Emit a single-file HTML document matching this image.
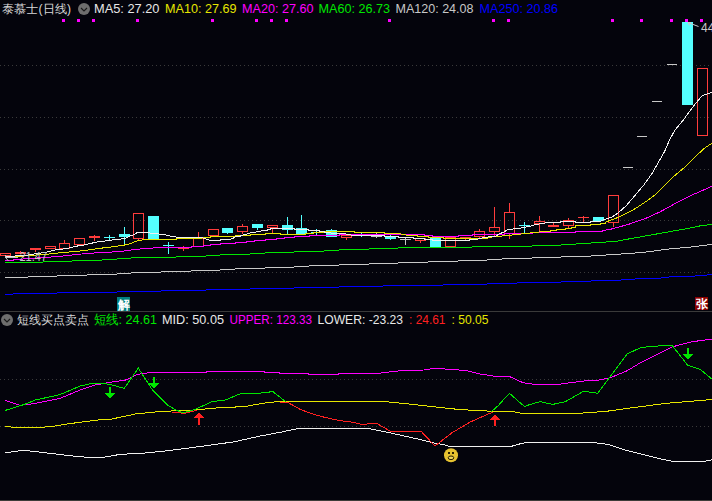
<!DOCTYPE html>
<html><head><meta charset="utf-8"><style>html,body{margin:0;padding:0;background:#04040c;overflow:hidden}svg{display:block}</style></head>
<body><svg width="712" height="501" shape-rendering="crispEdges" font-family="Liberation Sans, sans-serif">
<rect width="712" height="501" fill="#04040c"/>
<line x1="0" y1="65.5" x2="712" y2="65.5" stroke="#3a3a3a" stroke-dasharray="1 3"/>
<line x1="0" y1="117.5" x2="712" y2="117.5" stroke="#3a3a3a" stroke-dasharray="1 3"/>
<line x1="0" y1="169.5" x2="712" y2="169.5" stroke="#3a3a3a" stroke-dasharray="1 3"/>
<line x1="0" y1="220.5" x2="712" y2="220.5" stroke="#3a3a3a" stroke-dasharray="1 3"/>
<line x1="0" y1="272.5" x2="712" y2="272.5" stroke="#3a3a3a" stroke-dasharray="1 3"/>
<line x1="0" y1="379.5" x2="712" y2="379.5" stroke="#3a3a3a" stroke-dasharray="1 3"/>
<line x1="0" y1="426.5" x2="712" y2="426.5" stroke="#3a3a3a" stroke-dasharray="1 3"/>
<line x1="0" y1="311.5" x2="712" y2="311.5" stroke="#3a3a3a"/>
<rect x="0" y="500" width="712" height="1" fill="#3c3c38"/>
<rect x="62" y="19" width="3" height="3" fill="#ff00ff"/>
<rect x="77" y="19" width="3" height="3" fill="#ff00ff"/>
<rect x="92" y="19" width="3" height="3" fill="#ff00ff"/>
<rect x="136" y="19" width="3" height="3" fill="#ff00ff"/>
<rect x="211" y="19" width="3" height="3" fill="#ff00ff"/>
<rect x="255" y="19" width="3" height="3" fill="#ff00ff"/>
<rect x="270" y="19" width="3" height="3" fill="#ff00ff"/>
<rect x="285" y="19" width="3" height="3" fill="#ff00ff"/>
<rect x="388" y="19" width="3" height="3" fill="#ff00ff"/>
<rect x="492" y="19" width="3" height="3" fill="#ff00ff"/>
<rect x="507" y="19" width="3" height="3" fill="#ff00ff"/>
<rect x="611" y="19" width="3" height="3" fill="#ff00ff"/>
<rect x="640" y="19" width="3" height="3" fill="#ff00ff"/>
<rect x="670" y="19" width="3" height="3" fill="#ff00ff"/>
<rect x="685" y="19" width="3" height="3" fill="#ff00ff"/>
<rect x="700" y="19" width="3" height="3" fill="#ff00ff"/>
<rect x="0.5" y="253.5" width="10" height="2" fill="none" stroke="#ff3c3c"/>
<rect x="15" y="252" width="11" height="2" fill="#ff3c3c"/>
<line x1="20.5" y1="251" x2="20.5" y2="252" stroke="#ff3c3c"/>
<rect x="30" y="248" width="11" height="2" fill="#ff3c3c"/>
<line x1="35.5" y1="250" x2="35.5" y2="252" stroke="#ff3c3c"/>
<rect x="45.5" y="246.5" width="10" height="2" fill="none" stroke="#ff3c3c"/>
<rect x="59.5" y="243.5" width="10" height="5" fill="none" stroke="#ff3c3c"/>
<line x1="64.5" y1="240" x2="64.5" y2="243" stroke="#ff3c3c"/>
<rect x="74.5" y="238.5" width="10" height="6" fill="none" stroke="#ff3c3c"/>
<rect x="89" y="236" width="11" height="2" fill="#ff3c3c"/>
<line x1="94.5" y1="235" x2="94.5" y2="236" stroke="#ff3c3c"/>
<line x1="94.5" y1="238" x2="94.5" y2="241" stroke="#ff3c3c"/>
<rect x="104" y="237" width="11" height="1" fill="#54ffff"/>
<line x1="109.5" y1="235" x2="109.5" y2="241" stroke="#54ffff"/>
<rect x="119" y="234" width="11" height="3" fill="#54ffff"/>
<line x1="124.5" y1="227" x2="124.5" y2="234" stroke="#54ffff"/>
<line x1="124.5" y1="237" x2="124.5" y2="245" stroke="#54ffff"/>
<rect x="133.5" y="213.5" width="10" height="25" fill="none" stroke="#ff3c3c"/>
<line x1="138.5" y1="239" x2="138.5" y2="240" stroke="#ff3c3c"/>
<rect x="148" y="216" width="11" height="23" fill="#54ffff"/>
<rect x="163" y="245" width="11" height="1" fill="#54ffff"/>
<line x1="168.5" y1="242" x2="168.5" y2="254" stroke="#54ffff"/>
<rect x="178" y="248" width="11" height="1" fill="#ff3c3c"/>
<line x1="183.5" y1="246" x2="183.5" y2="248" stroke="#ff3c3c"/>
<line x1="183.5" y1="249" x2="183.5" y2="251" stroke="#ff3c3c"/>
<rect x="193.5" y="238.5" width="10" height="8" fill="none" stroke="#ff3c3c"/>
<line x1="198.5" y1="232" x2="198.5" y2="238" stroke="#ff3c3c"/>
<rect x="208.5" y="229.5" width="10" height="6" fill="none" stroke="#ff3c3c"/>
<rect x="222" y="228" width="11" height="5" fill="#54ffff"/>
<line x1="227.5" y1="233" x2="227.5" y2="234" stroke="#54ffff"/>
<rect x="237.5" y="226.5" width="10" height="5" fill="none" stroke="#ff3c3c"/>
<line x1="242.5" y1="224" x2="242.5" y2="226" stroke="#ff3c3c"/>
<line x1="242.5" y1="232" x2="242.5" y2="234" stroke="#ff3c3c"/>
<rect x="252" y="224" width="11" height="4" fill="#54ffff"/>
<line x1="257.5" y1="228" x2="257.5" y2="230" stroke="#54ffff"/>
<rect x="267.5" y="225.5" width="10" height="2" fill="none" stroke="#ff3c3c"/>
<line x1="272.5" y1="228" x2="272.5" y2="233" stroke="#ff3c3c"/>
<rect x="282" y="225" width="11" height="5" fill="#54ffff"/>
<line x1="287.5" y1="217" x2="287.5" y2="225" stroke="#54ffff"/>
<line x1="287.5" y1="230" x2="287.5" y2="234" stroke="#54ffff"/>
<rect x="296" y="228" width="11" height="6" fill="#54ffff"/>
<line x1="301.5" y1="215" x2="301.5" y2="228" stroke="#54ffff"/>
<rect x="311" y="232" width="11" height="1" fill="#54ffff"/>
<line x1="316.5" y1="229" x2="316.5" y2="235" stroke="#54ffff"/>
<rect x="326" y="230" width="11" height="7" fill="#54ffff"/>
<line x1="331.5" y1="229" x2="331.5" y2="230" stroke="#54ffff"/>
<rect x="341.5" y="235.5" width="10" height="2" fill="none" stroke="#ff3c3c"/>
<line x1="346.5" y1="238" x2="346.5" y2="240" stroke="#ff3c3c"/>
<rect x="356" y="235" width="11" height="1" fill="#54ffff"/>
<line x1="361.5" y1="233" x2="361.5" y2="237" stroke="#54ffff"/>
<rect x="371" y="236" width="11" height="1" fill="#c8c8c8"/>
<line x1="376.5" y1="233" x2="376.5" y2="238" stroke="#c8c8c8"/>
<rect x="385" y="236" width="11" height="3" fill="#54ffff"/>
<line x1="390.5" y1="235" x2="390.5" y2="236" stroke="#54ffff"/>
<line x1="390.5" y1="239" x2="390.5" y2="240" stroke="#54ffff"/>
<rect x="400" y="239" width="11" height="1" fill="#c8c8c8"/>
<line x1="405.5" y1="237" x2="405.5" y2="245" stroke="#c8c8c8"/>
<rect x="415.5" y="238.5" width="10" height="2" fill="none" stroke="#ff3c3c"/>
<line x1="420.5" y1="241" x2="420.5" y2="243" stroke="#ff3c3c"/>
<rect x="430" y="237" width="11" height="10" fill="#54ffff"/>
<rect x="445.5" y="237.5" width="10" height="9" fill="none" stroke="#ff3c3c"/>
<rect x="460" y="237" width="11" height="1" fill="#ff3c3c"/>
<line x1="465.5" y1="238" x2="465.5" y2="240" stroke="#ff3c3c"/>
<rect x="474.5" y="231.5" width="10" height="5" fill="none" stroke="#ff3c3c"/>
<line x1="479.5" y1="229" x2="479.5" y2="231" stroke="#ff3c3c"/>
<line x1="479.5" y1="237" x2="479.5" y2="238" stroke="#ff3c3c"/>
<rect x="489.5" y="227.5" width="10" height="4" fill="none" stroke="#ff3c3c"/>
<line x1="494.5" y1="207" x2="494.5" y2="227" stroke="#ff3c3c"/>
<line x1="494.5" y1="232" x2="494.5" y2="236" stroke="#ff3c3c"/>
<rect x="504.5" y="212.5" width="10" height="21" fill="none" stroke="#ff3c3c"/>
<line x1="509.5" y1="203" x2="509.5" y2="212" stroke="#ff3c3c"/>
<line x1="509.5" y1="234" x2="509.5" y2="239" stroke="#ff3c3c"/>
<rect x="519" y="225" width="11" height="1" fill="#54ffff"/>
<line x1="524.5" y1="222" x2="524.5" y2="233" stroke="#54ffff"/>
<rect x="534.5" y="221.5" width="10" height="2" fill="none" stroke="#ff3c3c"/>
<line x1="539.5" y1="216" x2="539.5" y2="221" stroke="#ff3c3c"/>
<line x1="539.5" y1="224" x2="539.5" y2="231" stroke="#ff3c3c"/>
<rect x="548" y="225" width="11" height="2" fill="#ff3c3c"/>
<line x1="553.5" y1="223" x2="553.5" y2="225" stroke="#ff3c3c"/>
<rect x="563.5" y="220.5" width="10" height="5" fill="none" stroke="#ff3c3c"/>
<line x1="568.5" y1="218" x2="568.5" y2="220" stroke="#ff3c3c"/>
<line x1="568.5" y1="226" x2="568.5" y2="228" stroke="#ff3c3c"/>
<rect x="578" y="217" width="11" height="1" fill="#ff3c3c"/>
<line x1="583.5" y1="216" x2="583.5" y2="217" stroke="#ff3c3c"/>
<line x1="583.5" y1="218" x2="583.5" y2="222" stroke="#ff3c3c"/>
<rect x="593" y="217" width="11" height="4" fill="#54ffff"/>
<rect x="608.5" y="195.5" width="10" height="27" fill="none" stroke="#ff3c3c"/>
<line x1="613.5" y1="223" x2="613.5" y2="227" stroke="#ff3c3c"/>
<rect x="623" y="167" width="10" height="1" fill="#c8c8c8"/>
<rect x="637" y="136" width="10" height="1" fill="#c8c8c8"/>
<rect x="652" y="101" width="10" height="1" fill="#c8c8c8"/>
<rect x="667" y="64" width="10" height="1" fill="#c8c8c8"/>
<rect x="682" y="22" width="11" height="83" fill="#54ffff"/>
<rect x="697.5" y="68.5" width="10" height="67" fill="none" stroke="#ff3c3c"/>
<rect x="5" y="294" width="8" height="1" fill="#0000ff"/>
<rect x="13" y="293" width="44" height="1" fill="#0000ff"/>
<rect x="57" y="292" width="60" height="1" fill="#0000ff"/>
<rect x="117" y="291" width="44" height="1" fill="#0000ff"/>
<rect x="161" y="290" width="45" height="1" fill="#0000ff"/>
<rect x="206" y="289" width="44" height="1" fill="#0000ff"/>
<rect x="250" y="288" width="44" height="1" fill="#0000ff"/>
<rect x="294" y="287" width="45" height="1" fill="#0000ff"/>
<rect x="339" y="286" width="44" height="1" fill="#0000ff"/>
<rect x="383" y="285" width="60" height="1" fill="#0000ff"/>
<rect x="443" y="284" width="44" height="1" fill="#0000ff"/>
<rect x="487" y="283" width="30" height="1" fill="#0000ff"/>
<rect x="517" y="282" width="44" height="1" fill="#0000ff"/>
<rect x="561" y="281" width="30" height="1" fill="#0000ff"/>
<rect x="591" y="280" width="30" height="1" fill="#0000ff"/>
<rect x="621" y="279" width="14" height="1" fill="#0000ff"/>
<rect x="635" y="278" width="26" height="1" fill="#0000ff"/>
<rect x="661" y="277" width="8" height="1" fill="#0000ff"/>
<rect x="669" y="276" width="26" height="1" fill="#0000ff"/>
<rect x="695" y="275" width="12" height="1" fill="#0000ff"/>
<rect x="707" y="274" width="5" height="1" fill="#0000ff"/>
<rect x="5" y="277" width="23" height="1" fill="#c8c8c8"/>
<rect x="28" y="276" width="29" height="1" fill="#c8c8c8"/>
<rect x="57" y="275" width="30" height="1" fill="#c8c8c8"/>
<rect x="87" y="274" width="30" height="1" fill="#c8c8c8"/>
<rect x="117" y="273" width="14" height="1" fill="#c8c8c8"/>
<rect x="131" y="272" width="30" height="1" fill="#c8c8c8"/>
<rect x="161" y="271" width="30" height="1" fill="#c8c8c8"/>
<rect x="191" y="270" width="29" height="1" fill="#c8c8c8"/>
<rect x="220" y="269" width="15" height="1" fill="#c8c8c8"/>
<rect x="235" y="268" width="30" height="1" fill="#c8c8c8"/>
<rect x="265" y="267" width="29" height="1" fill="#c8c8c8"/>
<rect x="294" y="266" width="15" height="1" fill="#c8c8c8"/>
<rect x="309" y="265" width="30" height="1" fill="#c8c8c8"/>
<rect x="339" y="264" width="30" height="1" fill="#c8c8c8"/>
<rect x="369" y="263" width="29" height="1" fill="#c8c8c8"/>
<rect x="398" y="262" width="30" height="1" fill="#c8c8c8"/>
<rect x="428" y="261" width="30" height="1" fill="#c8c8c8"/>
<rect x="458" y="260" width="29" height="1" fill="#c8c8c8"/>
<rect x="487" y="259" width="15" height="1" fill="#c8c8c8"/>
<rect x="502" y="258" width="30" height="1" fill="#c8c8c8"/>
<rect x="532" y="257" width="29" height="1" fill="#c8c8c8"/>
<rect x="561" y="256" width="30" height="1" fill="#c8c8c8"/>
<rect x="591" y="255" width="15" height="1" fill="#c8c8c8"/>
<rect x="606" y="254" width="15" height="1" fill="#c8c8c8"/>
<rect x="621" y="253" width="14" height="1" fill="#c8c8c8"/>
<rect x="635" y="252" width="11" height="1" fill="#c8c8c8"/>
<rect x="646" y="251" width="8" height="1" fill="#c8c8c8"/>
<rect x="654" y="250" width="7" height="1" fill="#c8c8c8"/>
<rect x="661" y="249" width="8" height="1" fill="#c8c8c8"/>
<rect x="669" y="248" width="11" height="1" fill="#c8c8c8"/>
<rect x="680" y="247" width="11" height="1" fill="#c8c8c8"/>
<rect x="691" y="246" width="8" height="1" fill="#c8c8c8"/>
<rect x="699" y="245" width="8" height="1" fill="#c8c8c8"/>
<rect x="707" y="244" width="5" height="1" fill="#c8c8c8"/>
<rect x="5" y="262" width="38" height="1" fill="#00e600"/>
<rect x="43" y="261" width="29" height="1" fill="#00e600"/>
<rect x="72" y="260" width="30" height="1" fill="#00e600"/>
<rect x="102" y="259" width="15" height="1" fill="#00e600"/>
<rect x="117" y="258" width="14" height="1" fill="#00e600"/>
<rect x="131" y="257" width="45" height="1" fill="#00e600"/>
<rect x="176" y="256" width="30" height="1" fill="#00e600"/>
<rect x="206" y="255" width="14" height="1" fill="#00e600"/>
<rect x="220" y="254" width="30" height="1" fill="#00e600"/>
<rect x="250" y="253" width="15" height="1" fill="#00e600"/>
<rect x="265" y="252" width="29" height="1" fill="#00e600"/>
<rect x="294" y="251" width="30" height="1" fill="#00e600"/>
<rect x="324" y="250" width="15" height="1" fill="#00e600"/>
<rect x="339" y="249" width="30" height="1" fill="#00e600"/>
<rect x="369" y="248" width="29" height="1" fill="#00e600"/>
<rect x="398" y="247" width="74" height="1" fill="#00e600"/>
<rect x="472" y="246" width="60" height="1" fill="#00e600"/>
<rect x="532" y="245" width="29" height="1" fill="#00e600"/>
<rect x="561" y="244" width="15" height="1" fill="#00e600"/>
<rect x="576" y="243" width="15" height="1" fill="#00e600"/>
<rect x="591" y="242" width="15" height="1" fill="#00e600"/>
<rect x="606" y="241" width="10" height="1" fill="#00e600"/>
<polyline points="616.0,241.5 625.7,239.5 642.6,236.5 659.4,233.5 676.3,230.5 693.1,227.5 701.6,225.5 712.0,224.5" fill="none" stroke="#00e600" stroke-width="1"/>
<polyline points="5.0,260.5 13.0,260.5 13.0,259.7 43.0,257.6 54.0,256.8 56.7,256.6 67.6,255.5 76.1,254.5 87.0,253.5 102.2,252.4 117.0,251.8 128.0,250.5 135.0,249.5 146.0,248.5 161.0,247.5 191.0,247.5 191.0,246.5 203.0,246.5 203.0,245.5 210.0,245.5 210.0,244.5 220.0,244.5 220.0,243.5 235.0,243.5 235.0,242.5 246.0,242.5 246.0,241.5 254.0,241.5 254.0,240.5 265.0,240.5 265.0,239.5 276.0,239.5 276.0,238.5 284.0,238.5 284.0,237.5 294.0,237.5 294.0,236.5 309.0,236.5 309.0,235.5 339.0,235.5 339.0,234.5 424.0,234.5 424.0,235.5 432.0,235.5 432.0,236.5 458.0,236.5 458.0,235.5 472.0,235.5 472.0,234.5 504.0,234.5 504.0,233.5 532.0,233.5 532.0,232.5 575.7,232.5 575.7,231.3 602.1,231.3 602.1,230.5 610.0,229.4 628.0,224.5 644.0,219.1 660.0,211.9 675.9,203.1 691.9,195.1 712.0,186.3" fill="none" stroke="#ff00ff" stroke-width="1"/>
<polyline points="7.0,256.3 20.0,256.3 43.8,254.4 54.0,253.6 60.9,252.6 71.8,251.8 82.8,250.7 91.2,249.6 98.0,248.6 105.5,247.6 113.0,246.8 121.0,245.5 126.0,244.8 131.0,243.5 135.0,241.5 139.0,240.5 146.0,239.5 176.0,239.5 176.0,238.5 201.0,238.5 201.0,237.5 210.0,237.5 210.0,236.5 235.0,236.5 235.0,235.5 250.0,235.5 250.0,234.5 265.0,234.5 265.0,233.5 280.0,233.5 280.0,234.5 305.0,234.5 305.0,233.5 313.0,233.5 313.0,232.5 324.0,232.5 324.0,231.5 354.0,231.5 354.0,232.5 384.0,232.5 384.0,233.5 398.0,233.5 409.0,235.5 417.0,235.5 417.0,236.5 428.0,236.5 428.0,237.5 443.0,237.5 443.0,238.5 487.0,238.5 487.0,237.5 497.0,236.5 502.0,236.0 517.0,234.5 543.0,231.5 550.0,231.5 550.0,230.5 556.6,230.5 556.6,229.3 565.0,229.3 565.0,228.1 571.0,228.1 571.0,227.1 575.7,227.1 575.7,225.7 590.7,225.7 590.7,224.5 600.3,224.5 600.3,223.3 605.1,223.3 605.1,222.3 620.0,216.7 629.6,211.9 637.6,207.1 647.2,200.7 656.7,193.5 664.7,185.5 674.3,175.9 683.9,168.0 693.5,158.4 704.7,148.0 712.0,143.2" fill="none" stroke="#e6e600" stroke-width="1"/>
<polyline points="5.0,257.0 15.0,256.0 28.0,255.0 47.0,252.0 55.0,250.0 60.9,249.4 66.8,248.4 71.8,247.3 76.9,246.1 82.8,245.2 86.2,244.4 92.1,243.1 98.0,241.8 105.5,241.0 114.0,239.7 121.0,239.0 126.0,238.0 130.0,236.0 133.0,235.0 137.0,232.8 146.0,232.5 157.0,233.8 165.0,234.8 172.0,236.5 180.0,237.5 201.0,237.5 206.0,239.0 211.0,240.5 220.0,240.5 221.0,239.5 229.0,239.5 233.0,238.5 235.0,237.0 240.0,236.2 244.0,234.5 248.0,233.8 251.0,232.8 255.0,232.2 260.0,231.2 265.0,230.5 270.0,229.5 271.0,228.5 294.0,228.5 294.0,229.3 308.0,229.3 308.0,230.5 319.0,230.5 319.0,231.5 324.0,231.5 324.0,232.0 335.0,233.5 343.0,233.5 354.0,235.5 384.0,235.5 384.0,236.5 398.0,236.5 398.0,237.5 413.0,237.5 413.0,238.5 424.0,238.5 424.0,239.5 432.0,239.5 432.0,240.5 469.0,240.5 469.0,239.5 476.0,239.5 483.0,237.8 491.0,236.5 496.0,236.0 500.0,233.5 503.0,232.5 507.0,230.0 513.0,229.0 521.0,228.0 525.0,227.2 531.0,226.0 535.0,224.5 539.0,224.0 545.0,223.0 547.0,222.5 560.8,222.3 560.8,221.4 575.7,221.4 575.7,222.3 590.7,222.3 590.7,221.4 600.3,221.4 604.0,219.6 612.0,217.0 618.0,213.0 626.4,205.5 636.0,194.3 644.0,184.7 652.0,173.5 658.3,162.4 664.7,151.2 669.5,140.0 675.0,130.0 683.4,119.9 694.4,104.9 702.2,95.5 712.0,92.4" fill="none" stroke="#f0f0f0" stroke-width="1"/>
<g shape-rendering="geometricPrecision">
<text x="19.5" y="260.5" fill="#c8c8c8" font-size="12" textLength="27.5" lengthAdjust="spacingAndGlyphs">21.47</text>
<polyline points="5.5,255 5.5,257.5 18,257.5" fill="none" stroke="#c8c8c8" shape-rendering="crispEdges"/><polyline points="6,258 8.5,261" fill="none" stroke="#c8c8c8"/>
<text x="701" y="32" fill="#c8c8c8" font-size="12">44</text>
<polyline points="688,22.5 698.5,26.5" fill="none" stroke="#c8c8c8"/><polyline points="691,22.5 688,22.5 689.5,25.5" fill="none" stroke="#c8c8c8" stroke-width="0.9"/>
</g>
<rect x="117" y="297" width="13" height="14" fill="#008080"/>
<text x="117.5" y="308.5" fill="#ffffff" font-size="12" font-weight="bold" textLength="12" lengthAdjust="spacingAndGlyphs">解</text>
<rect x="695" y="297" width="13" height="13" fill="#8c0000"/>
<text x="695.5" y="307.5" fill="#ffffff" font-size="12" font-weight="bold" textLength="12" lengthAdjust="spacingAndGlyphs">张</text>
<polyline points="5.0,400.5 20.0,405.2 35.0,403.5 60.0,398.4 80.0,390.0 95.0,385.0 110.0,382.3 125.2,380.2 137.8,374.3 149.6,372.6 206.1,372.6 206.1,371.5 264.7,371.5 264.7,372.5 279.8,372.5 279.8,373.5 308.5,373.5 308.5,374.5 338.8,374.5 338.8,373.5 379.1,373.3 395.9,371.1 423.8,370.0 435.0,368.3 446.2,369.1 465.8,370.5 479.7,373.9 493.7,376.1 510.5,377.0 523.2,382.8 533.1,384.2 559.8,384.2 582.2,381.1 599.1,380.0 610.3,377.8 627.2,370.7 641.2,362.3 658.1,353.9 672.1,346.9 691.8,341.8 712.0,339.0" fill="none" stroke="#ff00ff" stroke-width="1"/>
<polyline points="5.0,426.4 14.0,427.3 41.9,427.3 55.9,425.9 69.9,423.6 97.8,420.0 110.0,419.4 135.3,414.0 160.6,411.4 189.3,410.3 206.1,408.9 220.0,407.6 235.2,407.6 235.2,406.4 246.1,406.4 261.3,403.5 269.7,402.5 279.8,401.3 381.9,401.3 409.9,404.1 451.8,408.8 473.0,410.4 486.8,410.4 487.3,411.5 513.0,411.5 521.4,413.4 575.9,413.5 605.7,411.4 634.0,407.5 666.8,403.3 712.0,399.5" fill="none" stroke="#e6e600" stroke-width="1"/>
<polyline points="5.0,453.0 19.6,450.7 27.9,450.7 41.9,452.4 75.5,456.3 92.2,457.7 103.4,457.2 120.2,454.4 145.3,453.0 167.7,450.7 198.0,446.8 234.3,441.8 259.4,436.2 281.8,432.0 298.6,428.4 367.9,428.4 390.3,432.9 423.8,440.4 436.0,443.5 443.0,444.5 448.0,446.0 457.4,446.8 485.3,446.8 511.9,446.2 522.3,443.2 532.8,442.0 575.9,442.0 601.2,443.2 610.2,445.0 625.1,450.1 660.8,459.0 671.2,461.1 705.5,461.1 712.0,459.9" fill="none" stroke="#f0f0f0" stroke-width="1"/>
<polyline points="5.0,410.5 21.0,405.5 27.0,403.5 35.0,400.1 60.0,394.6 80.0,386.1 92.0,383.3 102.0,383.3 110.0,384.5 124.3,388.3 138.3,368.1 152.2,389.5 160.6,397.9 168.2,405.5 176.6,410.3 182.5,412.6 189.3,411.4 196.0,408.9 212.9,401.3 223.4,400.5 228.4,398.8 241.1,393.4 260.5,393.4 261.3,392.4 268.9,392.4 270.6,391.2 272.3,391.2 284.9,401.0 287.0,402.5" fill="none" stroke="#00e600" stroke-width="1"/>
<polyline points="490.6,412.4 498.6,405.2 505.4,397.6 509.4,393.3 513.0,396.4 520.5,403.1 524.8,406.5 529.0,404.8 540.1,401.6 552.7,404.4 565.4,401.6 583.6,391.2 597.7,393.2 627.2,353.9 641.2,347.4 665.1,345.4 672.1,345.4 687.6,365.1 700.2,369.3 712.0,379.2" fill="none" stroke="#00e600" stroke-width="1"/>
<polyline points="172.2,412.6 180.2,412.6 182.7,413.6 185.3,413.2 192.0,411.5 197.1,410.4" fill="none" stroke="#ff2020" stroke-width="1"/>
<polyline points="279.8,402.2 287.4,402.2 299.3,408.9 307.7,412.3 321.2,416.5 340.0,420.7 350.0,421.7 362.4,424.5 376.3,423.1 390.3,431.2 421.0,431.2 435.0,446.0 451.8,432.9 470.0,422.1 492.7,412.1" fill="none" stroke="#ff2020" stroke-width="1"/>
<rect x="109" y="387" width="2" height="7" fill="#00e600"/>
<polygon points="105,393 115,393 110,399" fill="#00e600"/>
<rect x="153" y="377" width="2" height="7" fill="#00e600"/>
<polygon points="149,383 159,383 154,389" fill="#00e600"/>
<rect x="687" y="348" width="2" height="7" fill="#00e600"/>
<polygon points="683,354 693,354 688,360" fill="#00e600"/>
<rect x="198" y="417" width="2" height="8" fill="#ff2020"/>
<polygon points="194,418 204,418 199,412" fill="#ff2020"/>
<rect x="494" y="419" width="2" height="7" fill="#ff2020"/>
<polygon points="490,420 500,420 495,414" fill="#ff2020"/>
<g shape-rendering="geometricPrecision">
<circle cx="451" cy="455.2" r="7" fill="#e6c230"/>
<rect x="448" y="452" width="2" height="2" fill="#2a2000"/><rect x="452" y="452" width="2" height="2" fill="#2a2000"/>
<ellipse cx="451" cy="457.8" rx="2.8" ry="1.8" fill="#f0d860" stroke="#2a2000" stroke-width="1"/>
</g>
<g shape-rendering="geometricPrecision">
<text x="2" y="13" fill="#d8d8d8" font-size="12" textLength="69" lengthAdjust="spacingAndGlyphs">泰慕士(日线)</text>
<circle cx="84" cy="9" r="6" fill="#6e6e6e"/><polyline points="81,8 84,11 87,8" fill="none" stroke="#1a1a1a" stroke-width="1.1" shape-rendering="geometricPrecision"/>
<text x="94" y="13" fill="#e8e8e8" font-size="13" textLength="65.5" lengthAdjust="spacingAndGlyphs">MA5: 27.20</text>
<text x="165" y="13" fill="#e6e600" font-size="13" textLength="71.5" lengthAdjust="spacingAndGlyphs">MA10: 27.69</text>
<text x="242" y="13" fill="#ff00ff" font-size="13" textLength="71.5" lengthAdjust="spacingAndGlyphs">MA20: 27.60</text>
<text x="318.5" y="13" fill="#00e600" font-size="13" textLength="71.5" lengthAdjust="spacingAndGlyphs">MA60: 26.73</text>
<text x="395.5" y="13" fill="#c8c8c8" font-size="13" textLength="78" lengthAdjust="spacingAndGlyphs">MA120: 24.08</text>
<text x="479.5" y="13" fill="#0000ff" font-size="13" textLength="78.5" lengthAdjust="spacingAndGlyphs">MA250: 20.86</text>
<circle cx="7" cy="320" r="6" fill="#6e6e6e"/><polyline points="4,319 7,322 10,319" fill="none" stroke="#1a1a1a" stroke-width="1.1" shape-rendering="geometricPrecision"/>
<text x="17" y="324" fill="#d8d8d8" font-size="12" textLength="72" lengthAdjust="spacingAndGlyphs">短线买点卖点</text>
<text x="93.5" y="324" fill="#00e600" font-size="13" textLength="63.5" lengthAdjust="spacingAndGlyphs">短线: 24.61</text>
<text x="162" y="324" fill="#e8e8e8" font-size="13" textLength="62" lengthAdjust="spacingAndGlyphs">MID: 50.05</text>
<text x="229.5" y="324" fill="#ff00ff" font-size="13" textLength="82.5" lengthAdjust="spacingAndGlyphs">UPPER: 123.33</text>
<text x="317.5" y="324" fill="#e8e8e8" font-size="13" textLength="85.5" lengthAdjust="spacingAndGlyphs">LOWER: -23.23</text>
<text x="409" y="324" fill="#ff2020" font-size="13" textLength="36.5" lengthAdjust="spacingAndGlyphs">: 24.61</text>
<text x="451.5" y="324" fill="#e6e600" font-size="13" textLength="37" lengthAdjust="spacingAndGlyphs">: 50.05</text>
</g>
</svg></body></html>
